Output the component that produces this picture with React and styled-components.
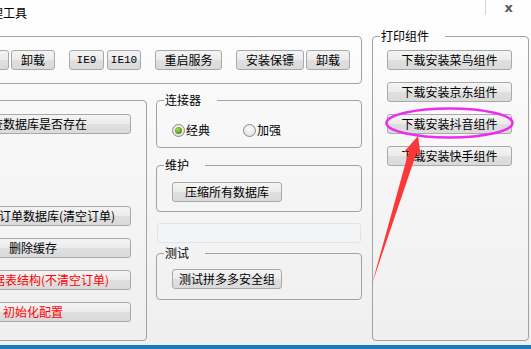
import React from 'react';
import styled, { createGlobalStyle } from 'styled-components';

const GlobalStyle = createGlobalStyle`
  html, body {
    margin: 0;
    padding: 0;
    overflow: hidden;
    background: #f0f0f0;
  }
  body {
    font-family: "Noto Sans CJK SC", "Noto Sans", sans-serif;
    font-size: 12px;
    color: #000;
  }
`;

const Screen = styled.div`
  position: relative;
  width: 531px;
  height: 349px;
  overflow: hidden;
`;

// the tool window is dragged partly off the left edge of the screen
const Window = styled.div`
  width: 740px;
  height: 349px;
  margin-left: -200px;
  box-sizing: border-box;
  display: flex;
  flex-direction: column;
  background: linear-gradient(#ffffff 0%, #f8f8f8 35%, #efefef 100%);
  border-bottom: 4px solid #167cc0;
`;

const TitleBar = styled.div`
  height: 28px;
  flex: none;
  display: flex;
  align-items: flex-start;
`;

const Title = styled.div`
  padding: 5px 0 0 119px;
  font-size: 12px;
  line-height: 16px;
  white-space: nowrap;
  flex: 1;
`;

const TitleSeparator = styled.div`
  width: 1px;
  height: 15px;
  background: #d4d4d4;
  margin-right: 19px;
`;

const CloseButton = styled.div`
  font-family: "DejaVu Sans", sans-serif;
  font-weight: bold;
  font-size: 13px;
  line-height: 16px;
  color: #5a5a5a;
  margin-right: 27px;
`;

const Body = styled.div`
  flex: 1;
  min-height: 0;
  display: flex;
  gap: 10px;
  padding: 0 11px 4px 10px;
`;

const LeftArea = styled.div`
  width: 552px;
  display: flex;
  flex-direction: column;
  gap: 8px;
`;

const Group = styled.fieldset`
  margin: 0;
  padding: 0;
  min-width: 0;
  box-sizing: border-box;
  border: 1px solid #a2a2a2;
  border-radius: 4px;
  flex: ${(p) => (p.$grow ? 1 : 'none')};
  width: ${(p) => (p.$w ? `${p.$w}px` : 'auto')};
`;

const Legend = styled.legend`
  margin-left: 7px;
  padding: 0 16px 0 1px;
  font-size: 12px;
  line-height: 16px;
  white-space: nowrap;
`;

const ServiceRow = styled.div`
  display: flex;
  justify-content: flex-end;
  gap: 14px;
  padding: 6px 11px 13px 0;
`;

const ButtonPair = styled.div`
  display: flex;
  gap: ${(p) => p.$gap || 2}px;
`;

const Button = styled.button`
  box-sizing: border-box;
  flex: none;
  width: ${(p) => p.$w}px;
  height: 20px;
  margin: ${(p) => (p.$spaced ? '60px 0 0' : 0)};
  padding: 0;
  border: 1px solid #a9a9a9;
  border-radius: 3px;
  background: linear-gradient(#f4f4f4 0%, #ebebeb 50%, #dfdfdf 51%, #dadada 100%);
  font-family: ${(p) =>
    p.$mono ? '"Liberation Mono", monospace' : '"Noto Sans CJK SC", "Noto Sans", sans-serif'};
  font-size: ${(p) => (p.$mono ? 11 : 12)}px;
  line-height: 18px;
  color: ${(p) => (p.$danger ? '#ff0000' : '#000')};
  white-space: nowrap;
  text-align: center;
`;

const LowerRow = styled.div`
  flex: 1;
  display: flex;
  gap: 9px;
`;

const DbButtons = styled.div`
  display: flex;
  flex-direction: column;
  align-items: flex-end;
  gap: 12px;
  padding: 6px 15px 0 0;
`;

const MiddleColumn = styled.div`
  width: 206px;
  display: flex;
  flex-direction: column;
`;

const RadioRow = styled.div`
  display: flex;
  align-items: center;
  gap: 33px;
  height: 16px;
  padding: 14px 0 9px 15px;
`;

const RadioLabel = styled.label`
  display: inline-flex;
  align-items: center;
  gap: 1px;
  line-height: 16px;
`;

const RadioDot = styled.span`
  position: relative;
  box-sizing: border-box;
  width: 13px;
  height: 13px;
  border-radius: 50%;
  border: 1px solid #8a8a8a;
  background: radial-gradient(circle at 50% 40%, #fbfbfb 0%, #e6e9ed 60%, #d5d9de 100%);

  &::after {
    content: '';
    display: ${(p) => (p.$checked ? 'block' : 'none')};
    position: absolute;
    left: 2px;
    top: 2px;
    width: 7px;
    height: 7px;
    border-radius: 50%;
    background: radial-gradient(circle at 40% 35%, #a6dc5c 0%, #5c9f17 60%, #3f7a0a 100%);
  }
`;

const GroupBody = styled.div`
  padding: ${(p) => p.$pad};
`;

const MiddleGap = styled.div`
  height: ${(p) => p.$h}px;
  flex: none;
`;

const StatusBox = styled.div`
  height: 20px;
  margin: 0 1px;
  box-sizing: border-box;
  border: 1px solid #dfe4ea;
  border-radius: 3px;
  background: #f3f4f6;
`;

const PrintButtons = styled.div`
  display: flex;
  flex-direction: column;
  gap: 12px;
  padding: 6px 0 0 14px;
`;

const Annotation = styled.svg`
  position: absolute;
  left: 0;
  top: 0;
  pointer-events: none;
`;

const dbButtons = [
  { label: '检查数据库是否存在' },
  { label: '删除重建订单数据库(清空订单)', spaced: true },
  { label: '删除缓存' },
  { label: '修复数据表结构(不清空订单)', danger: true },
  { label: '初始化配置', danger: true },
];

const printButtons = ['下载安装菜鸟组件', '下载安装京东组件', '下载安装抖音组件', '下载安装快手组件'];

const App = () => (
  <Screen>
    <GlobalStyle />
    <Window>
      <TitleBar>
        <Title>数据库维护管理工具</Title>
        <TitleSeparator />
        <CloseButton>x</CloseButton>
      </TitleBar>
      <Body>
        <LeftArea>
          <Group>
            <Legend>打印服务</Legend>
            <ServiceRow>
              <ButtonPair>
                <Button $w={44}>安装</Button>
                <Button $w={44}>卸载</Button>
              </ButtonPair>
              <ButtonPair $gap={3}>
                <Button $w={35} $mono>IE9</Button>
                <Button $w={34} $mono>IE10</Button>
              </ButtonPair>
              <Button $w={67}>重启服务</Button>
              <ButtonPair>
                <Button $w={68}>安装保镖</Button>
                <Button $w={44}>卸载</Button>
              </ButtonPair>
            </ServiceRow>
          </Group>
          <LowerRow>
            <Group $grow>
              <Legend>数据库</Legend>
              <DbButtons>
                {dbButtons.map((b) => (
                  <Button key={b.label} $w={196} $spaced={b.spaced} $danger={b.danger}>
                    {b.label}
                  </Button>
                ))}
              </DbButtons>
            </Group>
            <MiddleColumn>
              <Group>
                <Legend>连接器</Legend>
                <RadioRow>
                  <RadioLabel>
                    <RadioDot $checked />
                    经典
                  </RadioLabel>
                  <RadioLabel>
                    <RadioDot />
                    加强
                  </RadioLabel>
                </RadioRow>
              </Group>
              <MiddleGap $h={9} />
              <Group>
                <Legend>维护</Legend>
                <GroupBody $pad="9px 0 9px 15px">
                  <Button $w={110}>压缩所有数据库</Button>
                </GroupBody>
              </Group>
              <MiddleGap $h={11} />
              <StatusBox />
              <MiddleGap $h={2} />
              <Group>
                <Legend>测试</Legend>
                <GroupBody $pad="8px 0 10px 15px">
                  <Button $w={110}>测试拼多多安全组</Button>
                </GroupBody>
              </Group>
            </MiddleColumn>
          </LowerRow>
        </LeftArea>
        <Group $w={157}>
          <Legend>打印组件</Legend>
          <PrintButtons>
            {printButtons.map((label) => (
              <Button key={label} $w={125}>
                {label}
              </Button>
            ))}
          </PrintButtons>
        </Group>
      </Body>
    </Window>
    <Annotation width="531" height="349" viewBox="0 0 531 349">
      <ellipse cx="449.5" cy="123" rx="63" ry="14.5" fill="none" stroke="#ee2cee" strokeWidth="2.6" />
      <polygon
        points="418,136 421,158 416.5,153 372,284 409,150.5 403.5,152.5"
        fill="#fb3838"
      />
    </Annotation>
  </Screen>
);

export default App;
